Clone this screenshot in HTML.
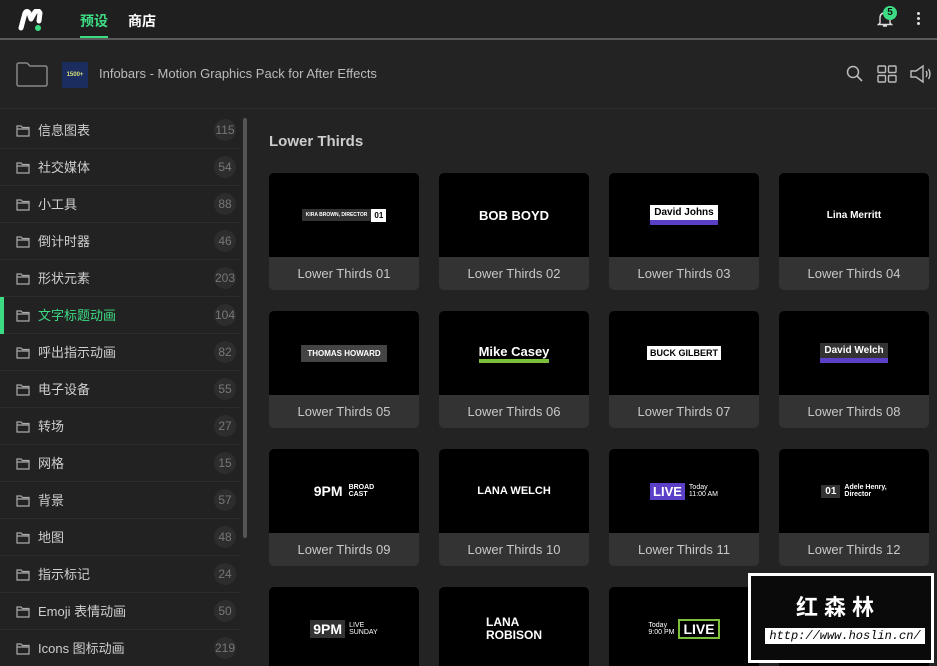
<!DOCTYPE html>
<html><head><meta charset="utf-8"><style>
*{margin:0;padding:0;box-sizing:border-box}
html,body{width:937px;height:666px;overflow:hidden}
body{background:#232323;font-family:"Liberation Sans","Noto Sans CJK SC",sans-serif;position:relative;color:#ddd}
.top{position:absolute;left:0;top:0;width:937px;height:38px;background:#1f1f1f}
.topline{position:absolute;left:0;top:38px;width:937px;height:2px;background:#5a5a5a}
.hdr{position:absolute;left:0;top:40px;width:937px;height:69px;background:#232323;border-bottom:1px solid #2e2e2e}
.side{position:absolute;left:0;top:111px;width:240px;height:555px;background:#222;padding-top:1px;overflow:hidden}
.row{height:37px;border-bottom:1px solid #2c2c2c;position:relative;font-size:13px;color:#cfcfcf;line-height:37px;padding-left:38px}
.row svg{position:absolute;left:16px;top:13px}
.row .n{position:absolute;right:4px;top:7px;width:22px;height:22px;border-radius:11px;background:#2d2d2d;color:#777;font-size:12px;line-height:22px;text-align:center}
.row.act{color:#3ddc84}
.row.act:before{content:"";position:absolute;left:0;top:0;width:4px;height:37px;background:#3ddc84}
.sb{position:absolute;left:243px;top:118px;width:4px;height:420px;background:#555;border-radius:2px}
.card{position:absolute;width:150px;height:117px;border-radius:5px;overflow:hidden;background:#333}
.card.last{height:79px;border-radius:5px 5px 0 0}
.card .th{height:84px;background:#000;position:relative;display:flex;align-items:center;justify-content:center;color:#fff;font-weight:bold;font-size:12px}
.card .lb{height:33px;line-height:34px;text-align:center;font-size:13px;color:#c8c8c8}
</style></head><body>
<div class="top">
<svg style="position:absolute;left:18px;top:9px" width="26" height="22" viewBox="0 0 26 22"><path d="M3 19 L7 4 Q9 1 11 4 L13 10 L17 3 Q20 0 22 4 L21 12" stroke="#fff" stroke-width="5" fill="none" stroke-linecap="round" stroke-linejoin="round"/><circle cx="20" cy="19" r="3" fill="#3ddc84"/></svg>
<div style="position:absolute;left:80px;top:11px;font-size:14px;font-weight:bold;color:#3ddc84">预设</div>
<div style="position:absolute;left:80px;top:36px;width:28px;height:3px;background:#3ddc84"></div>
<div style="position:absolute;left:128px;top:11px;font-size:14px;font-weight:bold;color:#fff">商店</div>
<svg style="position:absolute;left:877px;top:10px" width="16" height="18" viewBox="0 0 16 18"><path d="M3 13 V8 Q3 3 8 3 Q13 3 13 8 V13 L14.5 14.5 H1.5 Z M6 16 H10" stroke="#ddd" stroke-width="1.4" fill="none"/></svg>
<div style="position:absolute;left:883px;top:6px;width:14px;height:14px;border-radius:7px;background:#3ddc84;color:#111;font-size:10px;font-weight:bold;text-align:center;line-height:14px">5</div>
<div style="position:absolute;left:917px;top:12px;width:3px;height:3px;background:#ddd;border-radius:2px;box-shadow:0 5px 0 #ddd,0 10px 0 #ddd"></div>
</div>
<div class="topline"></div>
<div class="hdr">
<svg style="position:absolute;left:16px;top:22px" width="32" height="25" viewBox="0 0 32 25"><path d="M1 3 Q1 1 3 1 H11 L14 4 H29 Q31 4 31 6 V22 Q31 24 29 24 H3 Q1 24 1 22 Z" stroke="#888" stroke-width="1.5" fill="none"/></svg>
<div style="position:absolute;left:62px;top:22px;width:26px;height:26px;background:#1b2c5e;font-size:6px;font-weight:bold;text-align:center;line-height:26px;color:#d6e07a">1500+</div>
<div style="position:absolute;left:99px;top:26px;font-size:13px;color:#bbb">Infobars - Motion Graphics Pack for After Effects</div>
<svg style="position:absolute;left:846px;top:25px" width="18" height="18" viewBox="0 0 18 18"><circle cx="7" cy="7" r="5.5" stroke="#bbb" stroke-width="1.5" fill="none"/><path d="M11 11 L16 16" stroke="#bbb" stroke-width="1.6"/></svg>
<svg style="position:absolute;left:877px;top:25px" width="20" height="18" viewBox="0 0 20 18"><g stroke="#bbb" stroke-width="1.4" fill="none"><rect x="1" y="1" width="7.5" height="6.5" rx="1"/><rect x="11.5" y="1" width="7.5" height="6.5" rx="1"/><rect x="1" y="10.5" width="7.5" height="6.5" rx="1"/><rect x="11.5" y="10.5" width="7.5" height="6.5" rx="1"/></g></svg>
<svg style="position:absolute;left:910px;top:24px" width="22" height="20" viewBox="0 0 22 20"><g stroke="#bbb" stroke-width="1.4" fill="none"><path d="M1 7 H6 L13 2 V18 L6 13 H1 Z"/><path d="M16 7 Q18 10 16 13 M18.5 5 Q21.5 10 18.5 15"/></g></svg>
</div>
<div class="side">
<div class="row"><svg width="14" height="12" viewBox="0 0 14 12"><path d="M1 1 H5 L6.5 2.5 H13 V11 H1 Z M1 4 H13" stroke="#aaa" stroke-width="1.2" fill="none"/></svg>信息图表<span class="n">115</span></div>
<div class="row"><svg width="14" height="12" viewBox="0 0 14 12"><path d="M1 1 H5 L6.5 2.5 H13 V11 H1 Z M1 4 H13" stroke="#aaa" stroke-width="1.2" fill="none"/></svg>社交媒体<span class="n">54</span></div>
<div class="row"><svg width="14" height="12" viewBox="0 0 14 12"><path d="M1 1 H5 L6.5 2.5 H13 V11 H1 Z M1 4 H13" stroke="#aaa" stroke-width="1.2" fill="none"/></svg>小工具<span class="n">88</span></div>
<div class="row"><svg width="14" height="12" viewBox="0 0 14 12"><path d="M1 1 H5 L6.5 2.5 H13 V11 H1 Z M1 4 H13" stroke="#aaa" stroke-width="1.2" fill="none"/></svg>倒计时器<span class="n">46</span></div>
<div class="row"><svg width="14" height="12" viewBox="0 0 14 12"><path d="M1 1 H5 L6.5 2.5 H13 V11 H1 Z M1 4 H13" stroke="#aaa" stroke-width="1.2" fill="none"/></svg>形状元素<span class="n">203</span></div>
<div class="row act"><svg width="14" height="12" viewBox="0 0 14 12"><path d="M1 1 H5 L6.5 2.5 H13 V11 H1 Z M1 4 H13" stroke="#aaa" stroke-width="1.2" fill="none"/></svg>文字标题动画<span class="n">104</span></div>
<div class="row"><svg width="14" height="12" viewBox="0 0 14 12"><path d="M1 1 H5 L6.5 2.5 H13 V11 H1 Z M1 4 H13" stroke="#aaa" stroke-width="1.2" fill="none"/></svg>呼出指示动画<span class="n">82</span></div>
<div class="row"><svg width="14" height="12" viewBox="0 0 14 12"><path d="M1 1 H5 L6.5 2.5 H13 V11 H1 Z M1 4 H13" stroke="#aaa" stroke-width="1.2" fill="none"/></svg>电子设备<span class="n">55</span></div>
<div class="row"><svg width="14" height="12" viewBox="0 0 14 12"><path d="M1 1 H5 L6.5 2.5 H13 V11 H1 Z M1 4 H13" stroke="#aaa" stroke-width="1.2" fill="none"/></svg>转场<span class="n">27</span></div>
<div class="row"><svg width="14" height="12" viewBox="0 0 14 12"><path d="M1 1 H5 L6.5 2.5 H13 V11 H1 Z M1 4 H13" stroke="#aaa" stroke-width="1.2" fill="none"/></svg>网格<span class="n">15</span></div>
<div class="row"><svg width="14" height="12" viewBox="0 0 14 12"><path d="M1 1 H5 L6.5 2.5 H13 V11 H1 Z M1 4 H13" stroke="#aaa" stroke-width="1.2" fill="none"/></svg>背景<span class="n">57</span></div>
<div class="row"><svg width="14" height="12" viewBox="0 0 14 12"><path d="M1 1 H5 L6.5 2.5 H13 V11 H1 Z M1 4 H13" stroke="#aaa" stroke-width="1.2" fill="none"/></svg>地图<span class="n">48</span></div>
<div class="row"><svg width="14" height="12" viewBox="0 0 14 12"><path d="M1 1 H5 L6.5 2.5 H13 V11 H1 Z M1 4 H13" stroke="#aaa" stroke-width="1.2" fill="none"/></svg>指示标记<span class="n">24</span></div>
<div class="row"><svg width="14" height="12" viewBox="0 0 14 12"><path d="M1 1 H5 L6.5 2.5 H13 V11 H1 Z M1 4 H13" stroke="#aaa" stroke-width="1.2" fill="none"/></svg>Emoji 表情动画<span class="n">50</span></div>
<div class="row"><svg width="14" height="12" viewBox="0 0 14 12"><path d="M1 1 H5 L6.5 2.5 H13 V11 H1 Z M1 4 H13" stroke="#aaa" stroke-width="1.2" fill="none"/></svg>Icons 图标动画<span class="n">219</span></div>
</div>
<div class="sb"></div>
<div style="position:absolute;left:269px;top:133px;font-size:15px;font-weight:bold;color:#ccc">Lower Thirds</div>

<div class="card" style="left:269px;top:173px"><div class="th"><span style="background:#333;font-size:5px;padding:3px 4px">KIRA BROWN, DIRECTOR</span><span style="background:#fff;color:#000;font-size:8px;padding:2px 3px">01</span></div><div class="lb">Lower Thirds 01</div></div>
<div class="card" style="left:439px;top:173px"><div class="th" style="font-size:13px">BOB BOYD</div><div class="lb">Lower Thirds 02</div></div>
<div class="card" style="left:609px;top:173px"><div class="th"><span style="background:#fff;color:#000;font-size:10px;padding:2px 4px;border-bottom:5px solid #5b3fc9">David Johns</span></div><div class="lb">Lower Thirds 03</div></div>
<div class="card" style="left:779px;top:173px"><div class="th" style="font-size:10px">Lina Merritt</div><div class="lb">Lower Thirds 04</div></div>

<div class="card" style="left:269px;top:311px"><div class="th"><span style="background:#444;font-size:8px;padding:4px 6px">THOMAS HOWARD</span></div><div class="lb">Lower Thirds 05</div></div>
<div class="card" style="left:439px;top:311px"><div class="th"><span style="font-size:13px;border-bottom:4px solid #7bbf3a">Mike Casey</span></div><div class="lb">Lower Thirds 06</div></div>
<div class="card" style="left:609px;top:311px"><div class="th"><span style="background:#fff;color:#000;font-size:9px;padding:2px 3px">BUCK GILBERT</span></div><div class="lb">Lower Thirds 07</div></div>
<div class="card" style="left:779px;top:311px"><div class="th"><span style="background:#333;font-size:10px;padding:2px 4px;border-bottom:5px solid #5b3fc9">David Welch</span></div><div class="lb">Lower Thirds 08</div></div>

<div class="card" style="left:269px;top:449px"><div class="th" style="font-size:14px">9PM <span style="font-size:7px;margin-left:6px">BROAD<br>CAST</span></div><div class="lb">Lower Thirds 09</div></div>
<div class="card" style="left:439px;top:449px"><div class="th" style="font-size:11px">LANA WELCH</div><div class="lb">Lower Thirds 10</div></div>
<div class="card" style="left:609px;top:449px"><div class="th"><span style="background:#5b3fc9;font-size:13px;padding:1px 3px">LIVE</span><span style="font-size:7px;font-weight:normal;margin-left:4px">Today<br>11:00 AM</span></div><div class="lb">Lower Thirds 11</div></div>
<div class="card" style="left:779px;top:449px"><div class="th"><span style="background:#333;font-size:10px;padding:1px 4px">01</span><span style="font-size:7px;margin-left:4px">Adele Henry,<br>Director</span></div><div class="lb">Lower Thirds 12</div></div>

<div class="card last" style="left:269px;top:587px"><div class="th"><span style="background:#333;font-size:14px;padding:1px 3px">9PM</span><span style="font-size:7px;font-weight:normal;margin-left:4px">LIVE<br>SUNDAY</span></div></div>
<div class="card last" style="left:439px;top:587px"><div class="th" style="font-size:12px;line-height:13px;text-align:left">LANA<br>ROBISON</div></div>
<div class="card last" style="left:609px;top:587px"><div class="th"><span style="font-size:7px;font-weight:normal;margin-right:4px">Today<br>9:00 PM</span><span style="border:2px solid #7bbf3a;font-size:14px;padding:0 3px">LIVE</span></div></div>
<div class="card last" style="left:779px;top:587px"><div class="th"></div></div>

<div style="position:absolute;left:748px;top:573px;width:186px;height:90px;border:3px solid #fff;background:#0a0a0a"></div>
<div style="position:absolute;left:796px;top:590px;font-size:22px;font-weight:bold;color:#fff;letter-spacing:6px">红森林</div>
<div style="position:absolute;left:765px;top:628px;width:160px;height:16px;background:#fff;color:#000;font-family:'Liberation Mono',monospace;font-style:italic;font-size:12px;line-height:16px;text-align:center">http://www.hoslin.cn/</div>
</body></html>
